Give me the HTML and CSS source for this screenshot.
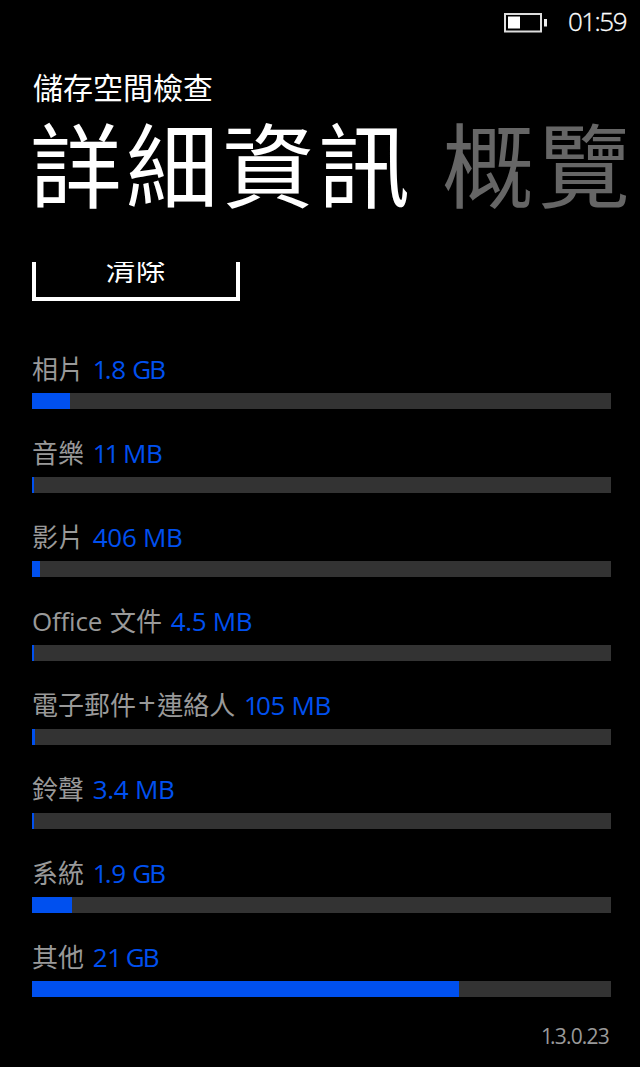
FILE: index.html
```html
<!DOCTYPE html>
<html lang="zh-Hant">
<head>
<meta charset="utf-8">
<title>儲存空間檢查</title>
<link rel="stylesheet" href="styles.css">
</head>
<body>
<div class="phone">
  <header class="status">
    <svg class="battery" width="44" height="20" viewBox="0 0 44 20"><rect x="1" y="1" width="36" height="17.5" fill="none" stroke="#ddd" stroke-width="2"/><rect x="4" y="3.5" width="12" height="12" fill="#fff"/><rect x="40" y="6" width="3" height="7.5" fill="#eee"/></svg>
    <span class="clock">01:59</span>
  </header>
  <h2 class="app-name">儲存空間檢查</h2>
  <nav class="pivots"><span class="pivot active">詳細資訊</span><span class="pivot">概覽</span></nav>
  <div class="scroll-top"><button class="clear">清除</button></div>
  <main class="list">
    <section class="item"><p class="label">相片 <span class="size"><span class="one">1</span>.8 <span class="gb">GB</span></span></p><div class="bar"><div class="fill" style="width:37.5px"></div></div></section>
    <section class="item"><p class="label">音樂 <span class="size"><span class="one">11</span> MB</span></p><div class="bar"><div class="fill" style="width:1.5px"></div></div></section>
    <section class="item"><p class="label">影片 <span class="size">406 MB</span></p><div class="bar"><div class="fill" style="width:8px"></div></div></section>
    <section class="item"><p class="label"><span class="latin">Office</span> 文件 <span class="size">4.5 MB</span></p><div class="bar"><div class="fill" style="width:1.5px"></div></div></section>
    <section class="item"><p class="label">電子郵件<span class="plus">+</span>連絡人 <span class="size"><span class="one">1</span>05 MB</span></p><div class="bar"><div class="fill" style="width:3px"></div></div></section>
    <section class="item"><p class="label">鈴聲 <span class="size">3.4 MB</span></p><div class="bar"><div class="fill" style="width:1.5px"></div></div></section>
    <section class="item"><p class="label">系統 <span class="size"><span class="one">1</span>.9 <span class="gb">GB</span></span></p><div class="bar"><div class="fill" style="width:40px"></div></div></section>
    <section class="item"><p class="label">其他 <span class="size">2<span class="one">1</span> <span class="gb">GB</span></span></p><div class="bar"><div class="fill" style="width:427px"></div></div></section>
  </main>
  <footer class="version"><span class="one">1</span>.3.0.23</footer>
</div>
</body>
</html>
```
FILE: styles.css
```css
* { box-sizing: border-box; margin: 0; padding: 0; }
body { background: #000; color: #fff; font-family: "Open Sans", "Noto Sans CJK TC", sans-serif; }
.phone { width: 640px; height: 1067px; overflow: hidden; background: #000; }
.status { display: flex; justify-content: flex-end; align-items: center; gap: 21px; height: 42px; padding-right: 14px; }
.battery { display: block; margin: 3px -1px 0 0; }
.clock { font-size: 26px; font-weight: 300; line-height: 42px; letter-spacing: -1.5px; height: 42px; -webkit-text-stroke: 0.3px #fff; }
.app-name { height: 75px; padding: 30px 0 0 33px; font-size: 30px; font-weight: 400; line-height: 32px; }
.pivots { display: flex; gap: 28px; height: 145px; padding-left: 30px; white-space: nowrap; }
.pivot { font-size: 92px; line-height: 97px; font-weight: 400; letter-spacing: 4px; color: #666; }
.active { color: #fff; }
.scroll-top { display: flex; align-items: flex-end; height: 39px; margin-left: 32px; width: 208px; overflow: hidden; }
.clear { flex: none; width: 208px; height: 64px; padding-bottom: 3px; border: 4px solid #fff; background: none; color: #fff; font: 29px/52px "Noto Sans CJK TC", sans-serif; letter-spacing: 1px; }
.list { padding: 48px 29px 0 32px; }
.item { height: 84px; }
.label { height: 44px; padding-top: 2px; font-size: 26px; line-height: 36px; color: #999; white-space: pre; }
.size { margin-left: 2px; color: #0050ef; letter-spacing: -0.3px; }
.one { letter-spacing: -3px; }
.gb { letter-spacing: -1.8px; }
.latin { letter-spacing: -0.2px; margin-right: 1px; }
.plus { margin: 0 1.5px 0 2px; font-size: 31px; line-height: 1; }
.bar { height: 16px; background: #333; }
.fill { height: 16px; background: #0050ef; }
.version { padding: 1px 31px; text-align: right; color: #999; font-size: 21px; line-height: 28px; letter-spacing: -0.8px; }
```
